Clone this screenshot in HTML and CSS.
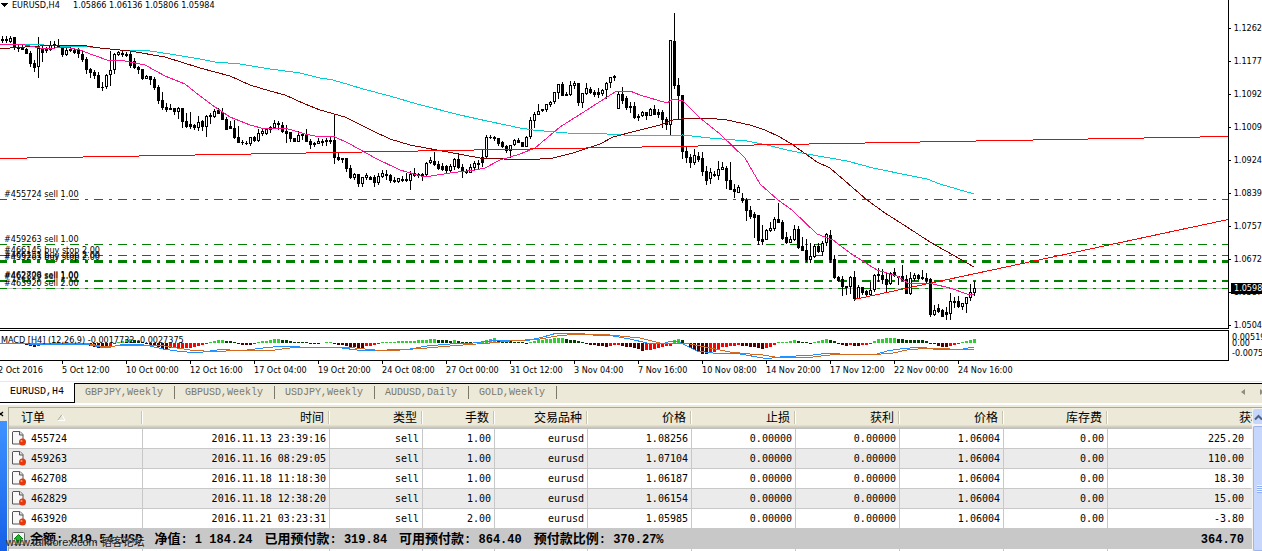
FILE: index.html
```html
<!DOCTYPE html>
<html lang="zh-CN">
<head>
<meta charset="utf-8">
<title>EURUSD,H4</title>
<link rel="stylesheet" href="styles.css">
</head>
<body>
<main class="chart">
  <div class="pane price-pane">
    <svg class="plot" id="price" aria-label="EURUSD,H4">
      <line class="bid" x1="0" y1="288.5" x2="100%" y2="288.5"/>
      <g class="orders">
        <line x1="-2" y1="199.5" x2="100%" y2="199.5"/>
        <line x1="-2" y1="244.5" x2="100%" y2="244.5"/>
        <line x1="-2" y1="255.5" x2="100%" y2="255.5"/>
        <line class="w3" x1="-2" y1="261.5" x2="100%" y2="261.5"/>
        <line class="w2" x1="-2" y1="281" x2="100%" y2="281"/>
        <line x1="-2" y1="288.5" x2="100%" y2="288.5"/>
      </g>
      <g id="candles"></g>
      <polyline class="ma cyan" points="0,45 28,44 60,46 90,47 120,50 150,51 170,54 200,59 215,62 240,64 270,69 300,73 320,78 333,80 350,85 363,89 390,96 417,104 460,115 487,121 520,128 533,130 567,133 607,134 640,136 683,135 710,138 747,141 767,145 787,150 807,154 847,161 873,168 907,175 927,179 940,184 957,189 974,194"/>
      <polyline class="ma maroon" points="0,48 10,48 40,46 65,45 80,45 100,48 130,51 165,57 200,68 230,76 250,85 270,91 285,95 305,104 320,110 345,117 373,131 390,139 410,145 453,153 480,158 527,160 553,158 573,153 600,144 613,137 640,130 660,125 673,120 690,118 717,119 727,120 750,125 765,130 780,137 793,145 817,162 830,168 867,200 885,213 907,227 930,242 960,259 974,267"/>
      <polyline class="ma pink" points="0,44 25,45 30,46 45,49 65,47 80,50 93,55 107,60 125,61 145,65 165,76 185,84 200,96 215,107 230,117 250,125 265,129 285,128 305,134 320,137 333,136 350,144 375,158 400,170 425,177 450,173 475,170 485,168 500,160 520,154 535,148 560,127 590,108 615,92 630,91 640,95 667,103 673,99 683,101 700,118 720,134 745,158 760,184 778,200 792,210 817,234 833,240 853,255 877,270 897,276 908,283 933,284 950,288 967,294 974,295"/>
      <line class="trend" x1="0" y1="158.5" x2="1228" y2="136.5"/>
      <line class="trend" x1="854" y1="299.5" x2="1228" y2="219.5"/>
      <path d="M1 3h7l-3.500 4z"/>
      <text x="12" y="8">EURUSD,H4</text>
      <text x="73" y="8">1.05866 1.06136 1.05806 1.05984</text>
      <text x="4" y="197">#455724 sell 1.00</text>
      <text x="4" y="242">#459263 sell 1.00</text>
      <text x="4" y="253">#466145 buy stop 2.00</text>
      <text x="4" y="258">#466151 buy stop 2.00</text>
      <text x="4" y="260">#455263 buy stop 2.00</text>
      <text x="4" y="278">#462708 sell 1.00</text>
      <text x="4" y="279">#462829 sell 1.00</text>
      <text x="4" y="286">#463920 sell 2.00</text>
    </svg>
    <div class="scale">
      <span>1.1262</span><span>1.1177</span><span>1.1092</span><span>1.1009</span><span>1.0924</span><span>1.0839</span><span>1.0757</span><span>1.0672</span><span>1.0587</span><span>1.0504</span>
      <b class="price-tag">1.0598</b>
    </div>
  </div>
  <div class="pane macd-pane">
    <svg class="plot" id="macd" aria-label="MACD">
      <g id="bars"></g>
      <polyline class="ma blue" points="0,12 20,12 28,13 38,14 50,13 80,13 90,14 100,16 107,17 115,15 125,13 137,13 150,15 163,18 177,20 187,21 203,21 217,19 223,18 230,19 247,19 263,17 273,16 290,15 300,16 330,16 342,17 357,19 387,19 410,18 427,15 450,13 473,12 490,10 500,9 530,9 543,6 557,2 577,2 593,4 613,5 630,8 647,12 663,13 668,11 678,10 683,13 697,20 713,22 740,23 763,27 772,27 780,26 813,24 830,22 840,23 853,24 877,23 887,20 900,18 920,16 933,18 947,19 963,18 974,16"/>
      <polyline class="ma orange" points="0,12 90,13 100,15 115,15 150,14 165,15 177,17 190,19 217,21 235,19 275,19 290,17 303,16 330,16 355,17 375,19 400,19 427,17 450,15 490,12 510,10 540,8 557,5 577,3 600,3 620,5 640,7 660,12 690,13 700,15 715,18 730,21 750,23 763,24 775,26 813,26 830,24 850,23 870,24 893,22 907,19 930,17 950,18 974,18"/>
      <text x="1" y="12">MACD [H4] (12,26,9) -0.0017732 -0.0027375</text>
    </svg>
    <div class="scale">
      <span class="hi">0.00519</span><span class="mid">0.00</span><span class="lo">-0.0075</span>
    </div>
  </div>
  <div class="dates">
    <span>2 Oct 2016</span><span>5 Oct 12:00</span><span>10 Oct 00:00</span><span>12 Oct 16:00</span><span>17 Oct 04:00</span><span>19 Oct 20:00</span><span>24 Oct 08:00</span><span>27 Oct 00:00</span><span>31 Oct 12:00</span><span>3 Nov 04:00</span><span>7 Nov 16:00</span><span>10 Nov 08:00</span><span>14 Nov 20:00</span><span>17 Nov 12:00</span><span>22 Nov 00:00</span><span>24 Nov 16:00</span>
  </div>
</main>

<nav class="tabs">
  <button class="tab active">EURUSD,H4</button>
  <button class="tab">GBPJPY,Weekly</button>
  <button class="tab">GBPUSD,Weekly</button>
  <button class="tab">USDJPY,Weekly</button>
  <button class="tab">AUDUSD,Daily</button>
  <button class="tab">GOLD,Weekly</button>
  <button class="arrow" aria-label="向左"><svg width="4" height="6"><path d="M4 0v6L0 3z"/></svg></button>
  <button class="arrow end" aria-label="向右"><svg width="4" height="6"><path d="M0 0v6l4-3z"/></svg></button>
</nav>

<section class="terminal">
  <aside class="rail">
    <button class="close" aria-label="关闭"><svg width="5" height="6"><path d="M-1.500 1L3 5M3 1L-1.500 5" fill="none" stroke="#000" stroke-width="1.300"/></svg></button>
    <div class="caption"></div>
  </aside>
  <div class="grid">
    <table>
      <colgroup><col class="c-order"><col class="c-time"><col class="c-type"><col class="c-lots"><col class="c-type"><col class="c-num"><col class="c-num"><col class="c-num"><col class="c-num"><col class="c-num"><col></colgroup>
      <thead>
        <tr><th class="first">订单<svg class="sort" width="9" height="8"><path d="M0.500 6.500L5 0.500" stroke="#aca899" fill="none"/><path d="M5 0.500L8 6.500H0.500" stroke="#fff" fill="none"/></svg></th><th>时间</th><th>类型</th><th>手数</th><th>交易品种</th><th>价格</th><th>止损</th><th>获利</th><th>价格</th><th>库存费</th><th class="cut"><div>获利</div></th></tr>
      </thead>
      <tbody id="orders"></tbody>
      <tfoot>
        <tr class="balance">
          <td colspan="10"><div class="sums">
            <svg class="ico" width="14" height="14"><rect x="0.500" y="0.500" width="12" height="12" rx="1" fill="#f4f4f4" stroke="#666"/><path d="M6.500 2.500L11 7H8.500V11H4.500V7H2z" fill="#1fb52a" stroke="#0a7a14"/></svg>
            <span>余额<i>: 819.54 USD</i></span><span>净值<i>: 1 184.24</i></span><span>已用预付款<i>: 319.84</i></span><span>可用预付款<i>: 864.40</i></span><span>预付款比例<i>: 370.27%</i></span>
          </div></td>
          <td class="total"><i>364.70</i></td>
        </tr>
        <tr class="rest"><td></td><td></td><td></td><td></td><td></td><td></td><td></td><td></td><td></td><td></td><td></td></tr>
      </tfoot>
    </table>
  </div>
  <div class="scroll">
    <button class="up" aria-label="向上"><svg width="9" height="8"><path d="M2 6.500L5.500 3L9 6.500" fill="none" stroke="#4d6185" stroke-width="2"/></svg></button>
    <div class="thumb"><div class="grip"></div></div>
  </div>
  <div class="watermark">www.talkforex.com <small>韬客论坛</small></div>
</section>
<script src="chart.js"></script>
</body>
</html>
```
FILE: styles.css
```css
* { box-sizing: border-box; }
html, body { height: 100%; margin: 0; }
body {
  display: flex;
  flex-direction: column;
  overflow: hidden;
  background: #fff;
  color: #000;
  font: 9px/11px "DejaVu Sans Condensed", "DejaVu Sans", sans-serif;
}
button { border: 0; padding: 0; background: none; font: inherit; color: inherit; }
svg { display: block; }

.chart { flex: none; overflow: hidden; border-bottom: 1px solid #ece9d8; }
.pane { display: grid; grid-template-columns: minmax(0, 1fr) 33px; }
.price-pane { height: 329px; }
.macd-pane { height: 31px; margin-top: 1px; }
.plot {
  box-sizing: content-box;
  width: calc(100% - 1px);
  height: calc(100% - 1px);
  overflow: hidden;
  border-right: 1px solid #000;
  border-bottom: 1px solid #000;
  shape-rendering: crispEdges;
}
.macd-pane .plot { border-top: 1px solid #000; height: calc(100% - 2px); }
.bid { stroke: #c0c0c0; }
.orders line { stroke: #008000; stroke-dasharray: 9 6 3 6; }
.orders .w3 { stroke-width: 3; }
.orders .w2 { stroke-width: 2; }
.trend { stroke: #f00; }
.ma { fill: none; stroke-width: 1; }
.cyan { stroke: #00ced1; }
.maroon { stroke: #800000; }
.pink { stroke: #ff1493; }
.blue { stroke: #1e90ff; }
.orange { stroke: #d2691e; }
.up-body { fill: #fff; stroke: #000; }
.gain { fill: #32cd32; }
.gain-fade { fill: #004000; }
.loss { fill: #500000; }
.loss-fade { fill: #f00; }

.scale { position: relative; overflow: hidden; white-space: nowrap; }
.price-pane .scale { padding-top: 12px; }
.price-pane .scale span { display: flex; align-items: center; height: 33px; gap: 3px; }
.price-pane .scale span::before { content: ""; width: 2px; height: 1px; background: #000; }
.price-tag {
  position: absolute;
  top: 283px;
  left: 2px;
  right: 0;
  padding-left: 3px;
  background: #000;
  color: #fff;
  font-weight: normal;
}
.macd-pane .scale span { position: absolute; left: 3px; }
.macd-pane .hi { top: 2px; }
.macd-pane .mid { top: 8px; }
.macd-pane .lo { top: 18px; }

.dates {
  display: flex;
  width: calc(100% - 31px);
  height: 21px;
  margin: -1px 0 0 -2px;
  border-top: 1px solid #000;
}
.dates span { position: relative; flex: none; width: 64px; padding-top: 4px; white-space: nowrap; }
.dates span::before { content: ""; position: absolute; top: 0; left: 0; width: 1px; height: 3px; background: #000; }

.tabs {
  flex: none;
  display: flex;
  height: 23px;
  padding-top: 2px;
  border-bottom: 2px solid #fff;
  background: linear-gradient(#fff 1px, #000 1px, #000 2px, #ece9d8 2px);
  font: 10px/13px "Liberation Mono", monospace;
  color: #7b786a;
}
.tab { position: relative; height: 17px; padding: 0 12px 0 10px; white-space: nowrap; }
.tab::after { content: ""; position: absolute; right: 0; top: 2px; bottom: 2px; width: 1px; background: #7b786a; }
.tab.active {
  height: 20px;
  margin-top: -1px;
  padding: 0 10px 2px;
  background: #fff;
  color: #000;
  border-right: 1px solid #000;
  border-bottom: 1px solid #000;
}
.tab.active::after { display: none; }
.arrow { margin-left: auto; padding-bottom: 3px; fill: #8f8c80; }
.arrow.end { margin-left: 15px; width: 2px; overflow: hidden; }

.terminal { position: relative; flex: 1; min-height: 0; display: flex; overflow: hidden; background: #ece9d8; padding-top: 2px; }
.rail { flex: none; width: 8px; display: flex; flex-direction: column; }
.close { height: 14px; }
.caption { flex: 1; width: 7px; background: linear-gradient(#3f93ff, #1560e8); }
.grid { flex: 1; min-width: 0; overflow: hidden; background: #fff; border-left: 1px solid #aca899; border-top: 1px solid #aca899; }
table { width: 100%; table-layout: fixed; border-collapse: separate; border-spacing: 0; font: 10px/12px "DejaVu Sans Mono", monospace; }
.c-order { width: 134px; }
.c-time { width: 187px; }
.c-type { width: 93px; }
.c-lots { width: 72px; }
.c-num { width: 104px; }
th, td { padding: 0 3px 0 0; text-align: right; overflow: hidden; white-space: nowrap; }
th {
  position: relative;
  height: 21px;
  padding: 0 6px 3px 0;
  background: linear-gradient(#ece9d8 17px, #e2decd 17px, #e2decd 18px, #d6d2c2 18px, #d6d2c2 19px, #cbc7b8 19px, #cbc7b8 20px, #c0c0c0 20px);
  font: 12px/18px "Noto Sans CJK SC", sans-serif;
}
th::after { content: ""; position: absolute; right: 0; top: 3px; width: 2px; height: 13px; background: linear-gradient(90deg, #c7c5b2 1px, #fff 1px); }
th.first { text-align: left; padding-left: 12px; }
.sort { display: inline-block; margin-left: 12px; }
th.cut { padding-right: 0; }
th.cut::after { display: none; }
th.cut div { margin-right: -11px; }
td { height: 20px; border-right: 1px solid #c8c8c8; border-bottom: 1px solid #c8c8c8; }
tbody tr:nth-child(even) { background: #ebebeb; }
td:last-child { padding-right: 7px; border-right-color: transparent; }
.order { display: flex; align-items: center; gap: 4px; padding-left: 3px; }
.balance { background: #c8c8c8; font: bold 13px/16px "Noto Sans CJK SC", sans-serif; }
.balance i { font: bold 12px/16px "Liberation Mono", monospace; white-space: pre; }
.sums { display: flex; align-items: center; gap: 12px; padding-left: 3px; }
.sums .ico { margin-right: -8px; }
.rest td { height: 30px; border-bottom: 0; }
.scroll { flex: none; width: 10px; display: flex; flex-direction: column; gap: 2px; padding: 1px 0 0 1px; border-top: 1px solid #aca899; background: #f4f3ee; }
.up { height: 15px; background: #c6d6fc; border-radius: 2px 0 0 2px; }
.thumb { flex: 1; display: flex; align-items: center; justify-content: flex-end; border: solid #9db5ee; border-width: 1px 0 1px 1px; border-radius: 2px 0 0 2px; background: #c6d6fc; }
.grip { width: 5px; height: 8px; background: repeating-linear-gradient(#eef4fe 0 1px, #8cb0f8 1px 2px); }
.watermark {
  position: absolute;
  left: 6px;
  bottom: 2px;
  font: 11px/14px "Liberation Sans", "Noto Sans CJK SC", sans-serif;
  color: #222;
  text-shadow: 1px 1px 1px #ddd;
}
.watermark small { font-size: 11px; }
```
FILE: chart.js
```js
const NS = 'http://www.w3.org/2000/svg';
const STEP = 4;
const FIRST = 2;

// high, body top, body bottom, low; a trailing 1 marks a rising candle
const candles = `36,39,41,43,1 36,39,41,43,1 36,38,42,43,1 37,37,48,50 44,48,49,52 45,47,50,50 48,49,54,54 51,53,64,67 60,63,68,72 37,48,67,78,1
46,48,53,62 47,49,51,53,1 41,45,50,51,1 41,44,46,48 39,45,47,47 46,46,55,57 45,50,55,56,1 47,49,51,52,1 49,50,53,54 48,50,54,58
50,54,60,62 57,59,70,74 68,69,73,78 70,72,76,79 72,75,88,88 82,87,88,91 74,75,87,89,1 51,70,75,86,1 53,54,70,74,1 51,52,55,56,1
51,53,55,57 52,54,56,57 50,54,66,68 58,61,68,69 66,67,70,74 69,69,79,80 75,76,79,79,1 76,76,80,85 77,79,88,90 85,87,101,104
92,100,108,110 103,107,110,112 104,108,110,110 108,108,112,115 107,108,112,119,1 108,108,122,128 113,121,127,128 112,124,127,129 124,125,128,130 116,122,128,131,1
120,121,127,131 115,116,127,137,1 113,115,117,124 109,111,117,118,1 108,110,114,114 108,112,120,120 117,119,130,130 121,126,129,129 120,128,138,139 126,137,143,143
140,142,143,145 141,143,144,145 137,137,144,146,1 136,137,141,142 129,133,141,142,1 128,131,134,136,1 128,129,134,135,1 126,127,130,133,1 120,123,128,128,1 121,123,125,130
122,125,132,133 125,131,134,143 132,132,139,142 138,138,142,142 131,135,142,142,1 133,134,136,140 129,134,142,142 139,141,145,149 142,143,145,147 138,141,144,144,1
139,141,143,146 138,140,142,146,1 136,140,142,144 114,140,158,164 153,157,160,161 158,158,160,163 158,158,169,172 165,168,178,179 173,174,178,180,1 174,174,184,187
177,177,184,187,1 173,175,178,180,1 176,177,180,180 175,177,183,187 173,176,183,185,1 170,173,177,178,1 170,174,176,180 174,175,181,183 177,180,182,183 178,178,182,183,1
176,179,181,182 173,179,181,182 171,174,181,190,1 168,173,176,177 173,174,176,178 173,174,176,181 162,163,175,177,1 157,160,163,164,1 152,161,165,166 161,164,169,170
163,166,170,171 165,166,171,174 164,166,171,172,1 158,159,167,170,1 153,159,168,169 164,167,172,178 169,171,173,174 164,167,173,173,1 161,163,168,170,1 160,163,165,169
149,157,163,167 135,137,157,158,1 135,137,138,139 136,137,139,141 138,138,144,146 141,142,147,148 145,146,151,153 145,145,151,158,1 139,140,145,146,1 138,140,143,143
142,142,147,147 136,137,147,147,1 117,120,137,139,1 112,114,121,128,1 104,111,115,115,1 109,109,111,112 104,104,110,112,1 101,102,105,107,1 92,92,102,104,1 84,84,93,99,1
82,84,96,96 92,94,96,96 81,85,95,96,1 81,83,86,89,1 83,83,103,106 93,93,103,108,1 83,88,94,95,1 87,89,93,94 90,92,95,97 88,92,95,98
89,90,94,96,1 82,83,90,99,1 77,77,83,88,1 75,76,78,81 92,94,109,109,1 87,94,101,104 96,98,108,110 102,106,108,113 102,106,118,119 114,116,118,121
111,112,116,117,1 112,112,116,120 108,109,116,116,1 105,109,115,115 109,112,115,118 110,112,120,128 117,119,125,130 40,40,125,135,1 13,41,86,89 78,85,96,119
95,95,152,159 147,151,158,163 154,157,163,168 149,155,163,165,1 152,156,160,162 152,158,172,176 166,171,181,185 168,172,179,184,1 171,174,176,177 161,169,176,180,1
162,167,170,170,1 166,168,181,189 162,180,190,190 184,189,192,198 185,187,193,193,1 193,198,201,203 198,200,211,221 206,210,217,219 212,214,218,238 215,215,241,245
225,239,242,245 229,230,240,240,1 222,228,231,232,1 217,219,229,231,1 203,219,223,223 220,222,239,240 232,237,243,244 236,239,243,243,1 225,229,240,241,1 226,229,248,249
237,246,251,251 239,250,260,262 243,256,260,263,1 244,246,257,258,1 243,246,252,253 241,243,252,256,1 233,234,243,246,1 230,235,260,263 255,259,278,279 276,277,281,282
276,279,287,296 286,286,288,295 276,277,287,294,1 271,277,299,301 285,287,299,299,1 287,287,293,295 290,291,295,296 282,290,295,295,1 274,275,290,292,1 268,274,276,282
269,275,280,284 273,279,285,293 272,273,284,285,1 268,272,276,277 276,276,278,285 265,276,280,281 275,279,294,294 272,278,294,295,1 273,275,279,281,1 274,275,279,280
270,277,279,280 273,278,281,283 278,279,315,317 305,310,315,316,1 304,308,312,313 309,310,317,317 307,312,315,320 293,301,314,320,1 297,301,303,308 296,301,307,308
303,303,307,310,1 297,297,304,313,1 284,292,298,301,1 281,288,293,296,1`.split(/\s+/);

// MACD histogram in pixels from the zero line
const histogram = [
  0,0,0,0,0,-1,-2,-3,-4,-3,-2,-2,-1,1,1,-1,-1,-1,-1,-2,-2,-2,-3,-4,-5,-5,-5,-4,-1,1,2,4,4,3,2,1,-1,-2,-3,-4,
  -6,-6,-5,-5,-5,-5,-5,-5,-4,-3,-2,-1,1,2,3,3,2,2,1,-1,-2,-2,-2,-1,1,2,2,3,4,4,3,3,2,1,1,1,1,-1,-1,-1,
  0,1,1,-1,-2,-2,-3,-4,-4,-5,-5,-3,-3,-2,-1,1,1,1,1,2,2,2,2,2,3,3,3,4,4,3,3,3,2,3,2,1,1,1,1,1,
  2,3,4,5,3,3,3,2,1,1,1,-1,1,2,3,3,4,4,5,5,5,4,3,3,2,1,-1,-2,-2,-3,-3,-4,-3,-2,-2,-3,-4,-4,-5,-6,
  -8,-7,-7,-6,-5,-4,-3,-3,3,4,3,-1,-5,-7,-8,-11,-11,-10,-9,-6,-4,-4,-3,-3,-2,-3,-3,-4,-4,-5,-6,-5,-4,-2,1,1,1,2,3,2,
  1,1,-1,1,2,3,4,3,2,-1,-2,-3,-2,-3,-3,-2,-2,-1,2,4,4,5,5,5,4,4,3,3,3,3,3,2,-1,-1,-3,-4,-4,-3,-2,-1,
  1,2,3,4
];

function rect(parent, x, y, width, height, cls) {
  const r = document.createElementNS(NS, 'rect');
  Object.entries({ x, y, width, height }).forEach(([k, v]) => r.setAttribute(k, v));
  if (cls) r.setAttribute('class', cls);
  parent.append(r);
}

const candleLayer = document.getElementById('candles');
candles.forEach((item, i) => {
  const [high, top, bottom, low, rising] = item.split(',').map(Number);
  const x = FIRST + STEP * i;
  rect(candleLayer, x, high, 1, low - high);
  if (rising) rect(candleLayer, x - 0.5, top + 0.5, 2, Math.max(bottom - top - 1, 1), 'up-body');
  else rect(candleLayer, x - 1, top, 3, bottom - top);
});

const barLayer = document.getElementById('bars');
let tone = 'gain';
histogram.forEach((v, i) => {
  const prev = histogram[i - 1] || 0;
  if (v > 0 && (v > prev || prev <= 0)) tone = 'gain';
  else if (v > 0 && v < prev) tone = 'gain-fade';
  else if (v < 0 && (v < prev || prev >= 0)) tone = 'loss';
  else if (v < 0 && v > prev) tone = 'loss-fade';
  rect(barLayer, FIRST + STEP * i - 1, v > 0 ? 12 - v : 12, 3, Math.abs(v), tone);
});

const orders = [
  ['455724', '2016.11.13 23:39:16', '1.00', '1.08256', '225.20'],
  ['459263', '2016.11.16 08:29:05', '1.00', '1.07104', '110.00'],
  ['462708', '2016.11.18 11:18:30', '1.00', '1.06187', '18.30'],
  ['462829', '2016.11.18 12:38:20', '1.00', '1.06154', '15.00'],
  ['463920', '2016.11.21 03:23:31', '2.00', '1.05985', '-3.80']
];
const icon = `<svg width="15" height="15"><path d="M1 .5h7l3 3V13H.5V1z" fill="#f8f8f8" stroke="#555"/><path d="M7.500 .5V4H11" fill="#ddd" stroke="#555"/><circle cx="10.500" cy="11" r="3.500" fill="#e8380d"/><circle cx="9.500" cy="10" r="1" fill="#ffa080"/></svg>`;
document.getElementById('orders').innerHTML = orders.map(([id, time, lots, open, profit]) =>
  `<tr><td><div class="order">${icon}${id}</div></td>` +
  [time, 'sell', lots, 'eurusd', open, '0.00000', '0.00000', '1.06004', '0.00', profit].map(v => `<td>${v}</td>`).join('') +
  '</tr>').join('');
```
